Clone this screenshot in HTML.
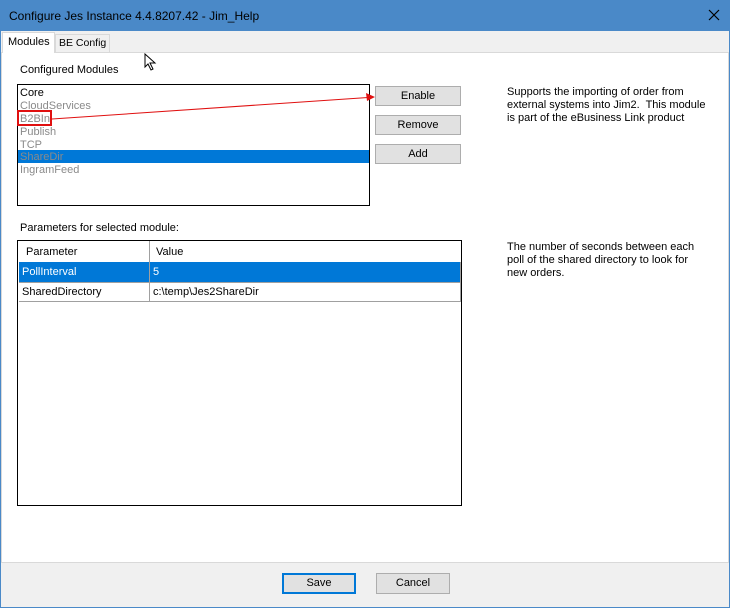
<!DOCTYPE html>
<html><head><style>
*{margin:0;padding:0;box-sizing:border-box}
body{width:730px;height:608px;position:relative;overflow:hidden;background:#fff;font-family:"Liberation Sans",sans-serif;font-size:11px;color:#000}
.a{position:absolute}
.btn{position:absolute;background:#e1e1e1;border:1px solid #adadad;text-align:center;line-height:18px;font-size:11px}
.it{position:absolute;left:2px;height:13px;line-height:13px;color:#8a8a8a;font-size:11px}
</style></head><body>
<div class="a" style="left:0;top:0;width:730px;height:608px;border:1px solid #4a89c8;background:#f0f0f0"></div>
<div class="a" style="left:0;top:0;width:730px;height:31px;background:#4a89c8"></div>
<div class="a" style="left:9px;top:9px;font-size:12px;color:#000">Configure Jes Instance 4.4.8207.42 - Jim_Help</div>
<svg class="a" style="left:708px;top:9px" width="12" height="12"><path d="M1 1 L11 11 M11 1 L1 11" stroke="#000" stroke-width="1.2"/></svg>
<div class="a" style="left:1px;top:52px;width:728px;height:511px;background:#fff;border:1px solid #d9d9d9"></div>
<div class="a" style="left:2px;top:32px;width:53px;height:21px;background:#fff;border:1px solid #d9d9d9;border-bottom:none"></div>
<div class="a" style="left:8px;top:36px">Modules</div>
<div class="a" style="left:55px;top:34px;width:55px;height:18px;background:#f0f0f0;border:1px solid #d9d9d9;border-bottom:none"></div>
<div class="a" style="left:59px;top:37px;font-size:10.5px">BE Config</div>
<svg class="a" style="left:144px;top:53px" width="16" height="20"><path d="M1 1 L1 14 L4 11 L7 17 L9 16 L6 10 L11 10 Z" fill="#fff" stroke="#000" stroke-width="1"/></svg>
<div class="a" style="left:20px;top:64px">Configured Modules</div>
<div class="a" style="left:17px;top:84px;width:353px;height:122px;border:1px solid #000;background:#fff">
<div class="it" style="top:2px;color:#000">Core</div>
<div class="it" style="top:15px">CloudServices</div>
<div class="it" style="top:28px">B2BIn</div>
<div class="it" style="top:41px">Publish</div>
<div class="it" style="top:54px">TCP</div>
<div class="a" style="left:0;top:65px;width:351px;height:13px;background:#0078d7"></div>
<div class="it" style="top:66px">ShareDir</div>
<div class="it" style="top:79px">IngramFeed</div>
</div>
<div class="a" style="left:17px;top:110px;width:35px;height:16px;border:2px solid #e01010"></div>
<svg class="a" style="left:0;top:0" width="730" height="200"><line x1="52" y1="119" x2="368" y2="97.5" stroke="#e01010" stroke-width="1"/><path d="M375 97 L366 93 L367 101 Z" fill="#e01010"/></svg>
<div class="btn" style="left:375px;top:86px;width:86px;height:20px">Enable</div>
<div class="btn" style="left:375px;top:115px;width:86px;height:20px">Remove</div>
<div class="btn" style="left:375px;top:144px;width:86px;height:20px">Add</div>
<div class="a" style="left:507px;top:86px;line-height:13px;width:200px">Supports the importing of order from external systems into Jim2.&nbsp; This module is part of the eBusiness Link product</div>
<div class="a" style="left:20px;top:222px">Parameters for selected module:</div>
<div class="a" style="left:17px;top:240px;width:445px;height:266px;border:1px solid #000;background:#fff">
<div class="a" style="left:131px;top:0;width:1px;height:60px;background:#a0a0a0"></div>
<div class="a" style="left:8px;top:5px">Parameter</div>
<div class="a" style="left:138px;top:5px">Value</div>
<div class="a" style="left:1px;top:21px;width:442px;height:20px;background:#0078d7"></div>
<div class="a" style="left:131px;top:21px;width:1px;height:20px;background:#a0a0a0"></div>
<div class="a" style="left:4px;top:25px;color:#fff">PollInterval</div>
<div class="a" style="left:135px;top:25px;color:#fff">5</div>
<div class="a" style="left:1px;top:41px;width:442px;height:1px;background:#a0a0a0"></div>
<div class="a" style="left:1px;top:60px;width:442px;height:1px;background:#a0a0a0"></div>
<div class="a" style="left:442px;top:21px;width:1px;height:40px;background:#a0a0a0"></div>
<div class="a" style="left:4px;top:45px">SharedDirectory</div>
<div class="a" style="left:135px;top:45px">c:\temp\Jes2ShareDir</div>
</div>
<div class="a" style="left:507px;top:241px;line-height:13px;width:195px">The number of seconds between each poll of the shared directory to look for new orders.</div>
<div class="btn" style="left:282px;top:573px;width:74px;height:21px;border:2px solid #0078d7;line-height:17px">Save</div>
<div class="btn" style="left:376px;top:573px;width:74px;height:21px;line-height:19px">Cancel</div>
</body></html>
